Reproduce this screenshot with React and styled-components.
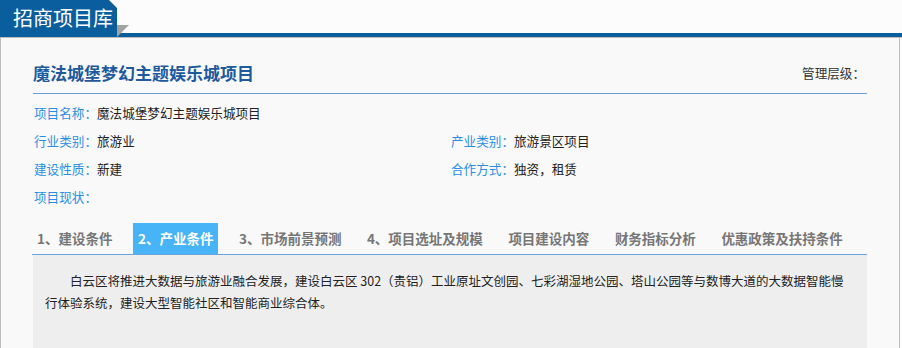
import React from 'react'
import styled, { createGlobalStyle } from 'styled-components'

const GlobalStyle = createGlobalStyle`
    body {
        margin: 0;
        background: #fcfcfc;
        font-family: "Noto Sans CJK SC", "Noto Sans", sans-serif;
        color: #333;
    }
`

const Header = styled.div`
    display: flex;
    height: 37px;
    border-bottom: 1px solid #bdbdbd;
`
const HeaderTab = styled.div`
    width: 117px;
    height: 37px;
    padding-left: 13px;
    box-sizing: border-box;
    background: #0b5e9e;
    color: #fff;
    font-size: 20px;
    line-height: 36px;
    clip-path: polygon(0 0, 109px 0, 117px 8px, 117px 100%, 0 100%);
`
const HeaderBar = styled.div`
    flex: 1;
    position: relative;
    background: linear-gradient(to bottom, transparent 33px, #0b5e9e 33px);
    &::before {
        content: '';
        position: absolute;
        left: 0;
        top: 25px;
        width: 12px;
        height: 12px;
        background: #a3a3a3;
        clip-path: polygon(0 0, 100% 0, 0 100%);
    }
`
const Panel = styled.div`
    width: 900px;
    box-sizing: border-box;
    padding: 0 32px;
    background: #f9f9f9;
    border-left: 1px solid #bdbdbd;
    border-right: 1px solid #bdbdbd;
    min-height: 310px;
`
const TitleRow = styled.div`
    display: flex;
    justify-content: space-between;
    align-items: center;
    padding: 23px 0 8px;
    line-height: 24px;
    border-bottom: 1px solid #6a9fd6;
`
const Title = styled.h1`
    margin: 0;
    font-size: 17px;
    font-weight: 700;
    color: #1d5a9e;
`
const Level = styled.span`
    font-size: 12.6px;
    color: #333;
    margin-right: 2px;
`
const Fields = styled.div`
    display: grid;
    grid-template-columns: 1fr 1fr;
    grid-auto-rows: 28px;
    margin-top: 4px;
`
const Field = styled.div`
    display: flex;
    align-items: center;
    padding-left: 1px;
    font-size: 12.6px;
    grid-column: ${p => p.$col || 'auto'};
`
const Label = styled.span`
    color: #2a8ee4;
`
const Value = styled.span`
    color: #222;
`
const Tabs = styled.ul`
    display: flex;
    margin: 13px 0 0 -1px;
    padding: 0;
    list-style: none;
    border-bottom: 1px solid #6aa6de;
`
const Tab = styled.li`
    height: 31px;
    line-height: 31px;
    padding: 0 5px;
    margin-right: 15.5px;
    font-size: 13.5px;
    font-weight: 700;
    color: ${p => (p.$active ? '#fff' : '#767676')};
    background: ${p => (p.$active ? '#46b4f6' : 'transparent')};
`
const Content = styled.div`
    background: #eeeeee;
    padding: 15px 12px;
    min-height: 70px;
    font-size: 12.5px;
    line-height: 21.6px;
    text-indent: 2em;
    color: #222;
`
const P = styled.p`
    margin: 0;
`

const tabs = ['1、建设条件', '2、产业条件', '3、市场前景预测', '4、项目选址及规模', '项目建设内容', '财务指标分析', '优惠政策及扶持条件']

export default function App() {
    return (
        <>
            <GlobalStyle />
            <Header>
                <HeaderTab>招商项目库</HeaderTab>
                <HeaderBar />
            </Header>
            <Panel>
                <TitleRow>
                    <Title>魔法城堡梦幻主题娱乐城项目</Title>
                    <Level>管理层级：</Level>
                </TitleRow>
                <Fields>
                    <Field $col="1 / 3"><Label>项目名称：</Label><Value>魔法城堡梦幻主题娱乐城项目</Value></Field>
                    <Field><Label>行业类别：</Label><Value>旅游业</Value></Field>
                    <Field><Label>产业类别：</Label><Value>旅游景区项目</Value></Field>
                    <Field><Label>建设性质：</Label><Value>新建</Value></Field>
                    <Field><Label>合作方式：</Label><Value>独资，租赁</Value></Field>
                    <Field $col="1 / 3"><Label>项目现状：</Label></Field>
                </Fields>
                <Tabs>
                    {tabs.map((t, i) => (
                        <Tab key={i} $active={i === 1}>{t}</Tab>
                    ))}
                </Tabs>
                <Content>
                    <P>白云区将推进大数据与旅游业融合发展，建设白云区 302（贵铝）工业原址文创园、七彩湖湿地公园、塔山公园等与数博大道的大数据智能慢行体验系统，建设大型智能社区和智能商业综合体。</P>
                </Content>
            </Panel>
        </>
    )
}
